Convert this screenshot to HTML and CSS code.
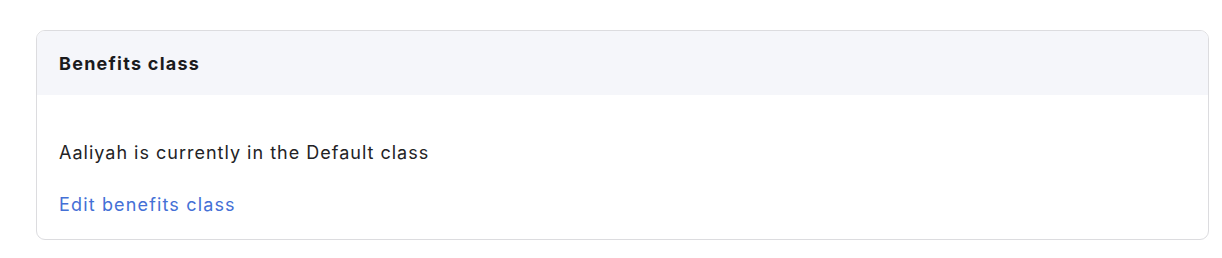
FILE: index.html
```html
<!DOCTYPE html>
<html>
<head>
<meta charset="utf-8">
<link rel="stylesheet" href="styles.css">
</head>
<body>
<div class="page">
  <section class="card">
    <header class="card-header"><h2 class="card-title">Benefits class</h2></header>
    <div class="card-body">
      <p class="card-text">Aaliyah is currently in the Default class</p>
      <a class="card-link" href="#">Edit benefits class</a>
    </div>
  </section>
</div>
</body>
</html>
```
FILE: styles.css
```css
html, body { margin: 0; padding: 0; background: #fff; }
body { font-family: Inter, "Noto Sans", "Liberation Sans", sans-serif; color: #1d1d1f; }
.page { padding: 30px 13px 18px 36px; }
.card {
  border: 1px solid #dcdcdf;
  border-radius: 9px;
  overflow: hidden;
  background: #fff;
}
.card-header {
  background: #f5f6fa;
  height: 64px;
  display: flex;
  align-items: center;
  padding: 0 22px;
}
.card-title { margin: 0; font-size: 18px; font-weight: 700; color: #1b1b1d; letter-spacing: 1.25px; }
.card-body { padding: 46px 22px 22px; display: flex; flex-direction: column; align-items: flex-start; }
.card-text { margin: 0 0 28px; font-size: 18px; line-height: 24px; color: #232325; letter-spacing: 1px; }
.card-link { font-size: 18px; line-height: 24px; color: #4470d6; text-decoration: none; letter-spacing: 1.15px; }
```
